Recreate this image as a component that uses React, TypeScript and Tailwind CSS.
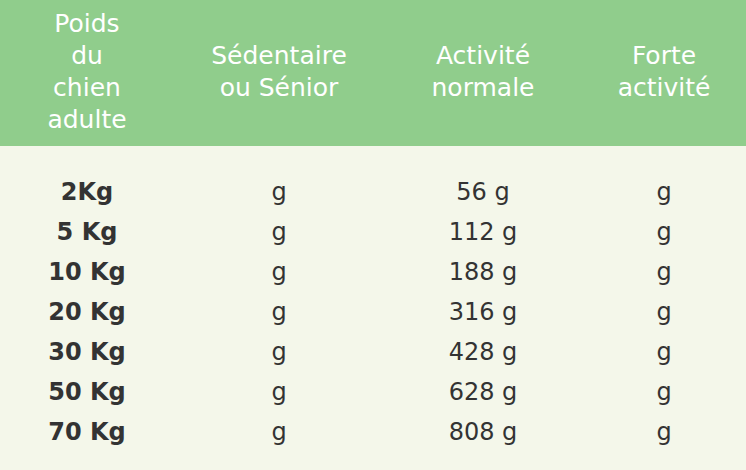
const rows = [
  { poids: "2Kg", sed: "g", normal: "56 g", forte: "g" },
  { poids: "5 Kg", sed: "g", normal: "112 g", forte: "g" },
  { poids: "10 Kg", sed: "g", normal: "188 g", forte: "g" },
  { poids: "20 Kg", sed: "g", normal: "316 g", forte: "g" },
  { poids: "30 Kg", sed: "g", normal: "428 g", forte: "g" },
  { poids: "50 Kg", sed: "g", normal: "628 g", forte: "g" },
  { poids: "70 Kg", sed: "g", normal: "808 g", forte: "g" },
];

export default function App() {
  return (
    <div
      className="w-[746px] h-[470px] bg-[#f4f7ea] text-[#333333] overflow-hidden"
      style={{ fontFamily: '"DejaVu Sans", sans-serif' }}
    >
      <div className="grid grid-cols-[174px_210px_198px_164px] items-center bg-[#90cd8c] text-white text-[25px] leading-[32px] text-center pt-2 pb-[10px]">
        <div>
          Poids
          <br />
          du
          <br />
          chien
          <br />
          adulte
        </div>
        <div>
          Sédentaire
          <br />
          ou Sénior
        </div>
        <div>
          Activité
          <br />
          normale
        </div>
        <div>
          Forte
          <br />
          activité
        </div>
      </div>

      <div className="pt-[26px] text-[24px] text-center">
        {rows.map((r) => (
          <div
            key={r.poids}
            className="grid grid-cols-[174px_210px_198px_164px] h-10 items-center"
          >
            <div className="font-bold">{r.poids}</div>
            <div>{r.sed}</div>
            <div>{r.normal}</div>
            <div>{r.forte}</div>
          </div>
        ))}
      </div>
    </div>
  );
}
